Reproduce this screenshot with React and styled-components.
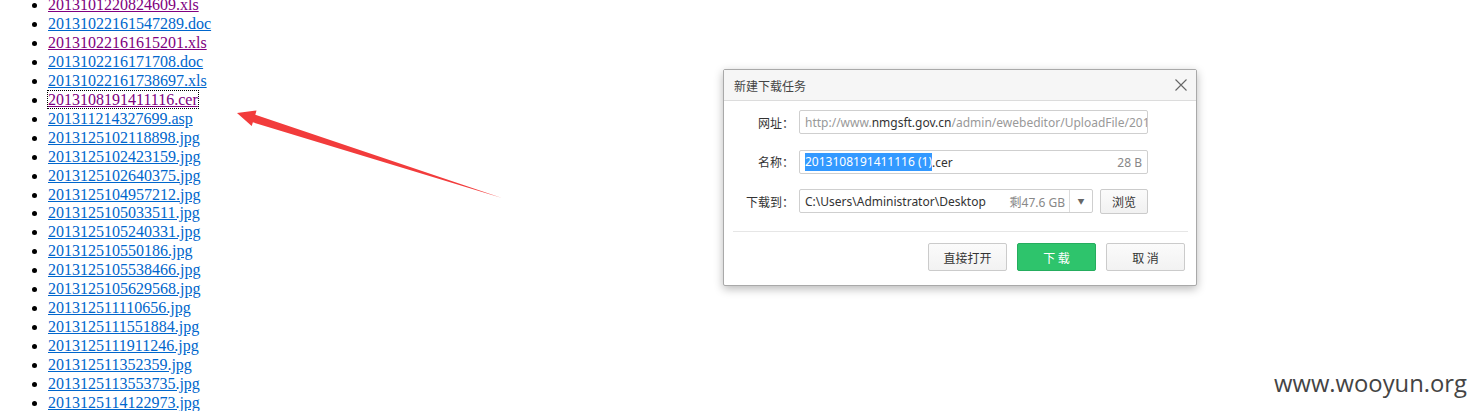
import React from "react";
import styled, { createGlobalStyle } from "styled-components";

const Global = createGlobalStyle`
  html, body { margin: 0; padding: 0; background: #fff; overflow: hidden; }
  body { font-family: "Liberation Serif", serif; }
`;

const Page = styled.div`
  position: relative;
  width: 1477px;
  height: 411px;
  overflow: hidden;
`;

const FileList = styled.ul`
  margin: -4px 0 0;
  padding: 0 0 0 48px;
  font-family: "Liberation Serif", "Times New Roman", serif;
  font-size: 16px;
  line-height: 18.95px;
  list-style: disc;
`;

const Item = styled.li``;

const FileLink = styled.a`
  color: ${(p) => (p.$visited ? "#800080" : "#0066cc")};
  text-decoration: underline;
  outline: ${(p) => (p.$focused ? "1px dotted #000" : "none")};
`;

const Arrow = styled.svg`
  position: absolute;
  left: 0;
  top: 0;
  pointer-events: none;
`;

const Dialog = styled.div`
  position: absolute;
  left: 723px;
  top: 69px;
  width: 472px;
  height: 215px;
  border: 1px solid #a9a9a9;
  border-radius: 2px;
  background: #fff;
  box-shadow: 0 3px 10px rgba(0, 0, 0, 0.28);
  font-family: "Noto Sans", "Noto Sans CJK SC", sans-serif;
  font-size: 12px;
  color: #333;
  display: flex;
  flex-direction: column;
`;

const TitleBar = styled.div`
  height: 30px;
  flex: none;
  background: #f6f6f6;
  border-bottom: 1px solid #dcdcdc;
  display: flex;
  align-items: center;
  justify-content: space-between;
  padding: 0 9px 0 10px;
  font-family: "Noto Sans CJK SC", sans-serif;
  font-size: 12px;
  color: #444;
`;

const Close = styled.svg`
  display: block;
`;

const Body = styled.div`
  padding: 9px 48px 0 10px;
  display: flex;
  flex-direction: column;
  gap: 15.5px;
`;

const Row = styled.div`
  display: flex;
  align-items: center;
  gap: 5px;
  height: 24px;
`;

const Label = styled.div`
  width: 60px;
  text-align: right;
  font-family: "Noto Sans CJK SC", sans-serif;
  color: #333;
  flex: none;
`;

const Field = styled.div`
  flex: 1;
  border: 1px solid #cfcfcf;
  border-radius: 2px;
  display: flex;
  align-items: center;
  padding: 1px 5px 0 5px;
  box-sizing: border-box;
  height: 24px;
  overflow: hidden;
  white-space: nowrap;
  background: #fff;
  min-width: 0;
`;

const Muted = styled.span`
  color: ${(p) => p.$c || "#999"};
`;

const Selected = styled.span`
  background: #3399ff;
  color: #fff;
  line-height: 18px;
`;

const Spacer = styled.span`
  flex: 1;
`;

const PathField = styled(Field)`
  padding-right: 0;
`;

const DropBtn = styled.div`
  width: 22px;
  height: 22px;
  margin-top: -1px;
  border-left: 1px solid #dcdcdc;
  margin-left: 4px;
  display: flex;
  align-items: center;
  justify-content: center;
  color: #666;
  font-size: 7px;
  flex: none;
`;

const SmallBtn = styled.button`
  width: 48px;
  height: 25px;
  flex: none;
  margin-left: 2px;
  border: 1px solid #cbcbcb;
  border-radius: 2px;
  background: linear-gradient(#fbfbfb, #f1f1f1);
  font-family: "Noto Sans CJK SC", sans-serif;
  font-size: 12px;
  color: #333;
  padding: 0;
`;

const Divider = styled.div`
  height: 1px;
  background: #e6e6e6;
  margin: 18px 8px 0 9px;
`;

const Footer = styled.div`
  display: flex;
  justify-content: flex-end;
  gap: 10px;
  padding: 11px 11px 0;
`;

const Btn = styled.button`
  width: 79px;
  height: 28px;
  border-radius: 2px;
  border: 1px solid ${(p) => (p.$primary ? "#25ad5e" : "#cbcbcb")};
  background: ${(p) => (p.$primary ? "#2ec46c" : "linear-gradient(#fbfbfb, #f2f2f2)")};
  color: ${(p) => (p.$primary ? "#fff" : "#333")};
  font-family: "Noto Sans CJK SC", sans-serif;
  font-size: 12px;
  padding: 0;
`;

const Watermark = styled.div`
  position: absolute;
  right: 10px;
  bottom: 12px;
  font-family: "Open Sans", "Noto Sans", sans-serif;
  font-size: 23.8px;
  color: #444;
`;

const files = [
  ["2013101220824609.xls", true],
  ["20131022161547289.doc"],
  ["20131022161615201.xls", true],
  ["2013102216171708.doc"],
  ["20131022161738697.xls"],
  ["2013108191411116.cer", true, true],
  ["201311214327699.asp"],
  ["2013125102118898.jpg"],
  ["2013125102423159.jpg"],
  ["2013125102640375.jpg"],
  ["2013125104957212.jpg"],
  ["2013125105033511.jpg"],
  ["2013125105240331.jpg"],
  ["201312510550186.jpg"],
  ["2013125105538466.jpg"],
  ["2013125105629568.jpg"],
  ["201312511110656.jpg"],
  ["2013125111551884.jpg"],
  ["2013125111911246.jpg"],
  ["201312511352359.jpg"],
  ["2013125113553735.jpg"],
  ["2013125114122973.jpg"],
];

export default function App() {
  return (
    <Page>
      <Global />
      <FileList>
        {files.map(([name, visited, focused]) => (
          <Item key={name}>
            <FileLink href="#" $visited={visited} $focused={focused}>
              {name}
            </FileLink>
          </Item>
        ))}
      </FileList>

      <Arrow width="520" height="220" viewBox="0 0 520 220">
        <polygon
          points="237,113 256.5,110.5 255.3,114.7 502,198 252.9,122.3 251.7,126.1"
          fill="#f23c3c"
        />
      </Arrow>

      <Dialog>
        <TitleBar>
          <span>新建下载任务</span>
          <Close width="12" height="12" viewBox="0 0 12 12">
            <path d="M0.5 0.5 L11.5 11.5 M11.5 0.5 L0.5 11.5" stroke="#666" strokeWidth="1.1" />
          </Close>
        </TitleBar>
        <Body>
          <Row>
            <Label>网址：</Label>
            <Field>
              <Muted>http://www.</Muted>
              <Muted $c="#333">nmgsft.gov.cn</Muted>
              <Muted>/admin/ewebeditor/UploadFile/2013108191411116.cer</Muted>
            </Field>
          </Row>
          <Row>
            <Label>名称：</Label>
            <Field>
              <Selected>2013108191411116 (1)</Selected>
              <span>.cer</span>
              <Spacer />
              <Muted $c="#888">28 B</Muted>
            </Field>
          </Row>
          <Row>
            <Label>下载到：</Label>
            <PathField>
              <span>C:\Users\Administrator\Desktop</span>
              <Spacer />
              <Muted $c="#888">剩47.6 GB</Muted>
              <DropBtn>▼</DropBtn>
            </PathField>
            <SmallBtn>浏览</SmallBtn>
          </Row>
        </Body>
        <Divider />
        <Footer>
          <Btn>直接打开</Btn>
          <Btn $primary>下 载</Btn>
          <Btn>取 消</Btn>
        </Footer>
      </Dialog>

      <Watermark>www.wooyun.org</Watermark>
    </Page>
  );
}
